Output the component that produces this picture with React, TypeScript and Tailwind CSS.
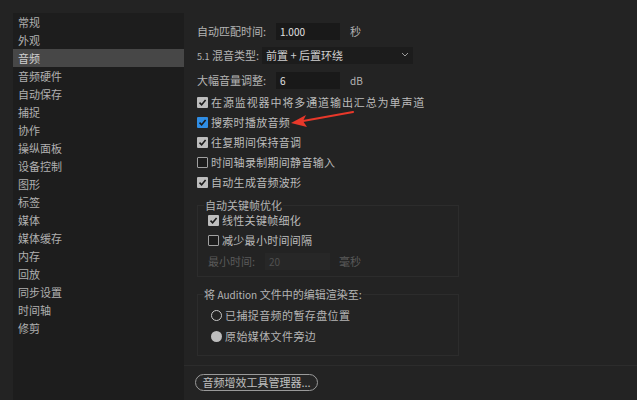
import React from 'react';

const font = { fontFamily: '"Noto Sans CJK SC", "Noto Sans", sans-serif' };

const sideItems = [
  '常规', '外观', '音频', '音频硬件', '自动保存', '捕捉', '协作', '操纵面板', '设备控制',
  '图形', '标签', '媒体', '媒体缓存', '内存', '回放', '同步设置', '时间轴', '修剪',
];

const Check: React.FC<{ checked?: boolean; blue?: boolean }> = ({ checked, blue }) => (
  <span
    className={`w-[11px] h-[11px] flex items-center justify-center shrink-0 rounded-[1px] ${
      checked ? (blue ? 'bg-[#2f8de4]' : 'bg-[#bdbdbd]') : 'border border-[#a0a0a0] bg-[#1c1c1c]'
    }`}
  >
    {checked && (
      <svg width="9" height="9" viewBox="0 0 9 9">
        <path d="M1.5 4.6 L3.6 6.8 L7.6 2" fill="none" stroke="#1a1a1a" strokeWidth="1.6" />
      </svg>
    )}
  </span>
);

const CheckRow: React.FC<{ label: string; checked?: boolean; blue?: boolean; wide?: boolean }> = ({
  label,
  checked,
  blue,
  wide,
}) => (
  <div className="h-[20px] flex items-center gap-[3px]">
    <Check checked={checked} blue={blue} />
    <span className={`text-[11px] text-[#bcbcbc] ${wide ? 'tracking-[0.9px]' : 'tracking-[0.3px]'}`}>{label}</span>
  </div>
);

export default function App() {
  return (
    <div className="w-[637px] h-[400px] bg-[#232323] flex relative overflow-hidden" style={font}>
      <aside className="ml-[13px] mt-[13px] w-[171px] bg-[#1d1d1d] flex flex-col">
        {sideItems.map((it) => (
          <div
            key={it}
            className={`h-[18px] flex items-center pl-[5px] text-[11px] ${
              it === '音频' ? 'bg-[#474747] text-[#d0d0d0]' : 'text-[#b0b0b0]'
            }`}
          >
            {it}
          </div>
        ))}
      </aside>

      <main className="pl-[13px] pt-[22px] flex flex-col text-[#b4b4b4] text-[11px]">
        <div className="h-[18px] flex items-center">
          <span className="w-[79px]">自动匹配时间:</span>
          <div className="w-[64px] h-[17px] bg-[#191919] flex items-center pl-[4px] text-[10px] text-[#e0e0e0]">1.000</div>
          <span className="ml-[10px]">秒</span>
        </div>
        <div className="h-[18px] mt-[6px] flex items-center">
          <span className="w-[65px]"><span className="text-[9px]">5.1</span> 混音类型:</span>
          <div className="w-[151px] h-[17px] bg-[#1c1c1c] flex items-center justify-between pl-[4px] pr-[4px] text-[#d0d0d0]">
            <span>前置 + 后置环绕</span>
            <svg width="8" height="6" viewBox="0 0 8 6">
              <path d="M1 1 L4 4 L7 1" fill="none" stroke="#9a9a9a" strokeWidth="1" />
            </svg>
          </div>
        </div>
        <div className="h-[18px] mt-[7px] flex items-center">
          <span className="w-[79px]">大幅音量调整:</span>
          <div className="w-[64px] h-[17px] bg-[#191919] flex items-center pl-[4px] text-[10px] text-[#e0e0e0]">6</div>
          <span className="ml-[10px] text-[10px]">dB</span>
        </div>

        <div className="mt-[3px] flex flex-col">
          <CheckRow label="在源监视器中将多通道输出汇总为单声道" checked wide />
          <CheckRow label="搜索时播放音频" checked blue />
          <CheckRow label="往复期间保持音调" checked />
          <CheckRow label="时间轴录制期间静音输入" />
          <CheckRow label="自动生成音频波形" checked />
        </div>

        <div className="relative mt-[13px] w-[262px] h-[72px] border border-[#2c2c2c] pl-[10px] pt-[4px]">
          <span className="absolute -top-[9px] left-[6px] px-[1px] bg-[#232323] text-[11px]">自动关键帧优化</span>
          <CheckRow label="线性关键帧细化" checked />
          <CheckRow label="减少最小时间间隔" />
          <div className="h-[18px] mt-[2px] flex items-center text-[#5a5a5a]">
            <span className="w-[57px]">最小时间:</span>
            <div className="w-[65px] h-[17px] bg-[#272727] flex items-center pl-[4px] text-[10px] text-[#505050]">20</div>
            <span className="ml-[9px]">毫秒</span>
          </div>
        </div>

        <div className="relative mt-[17px] w-[262px] h-[62px] border border-[#2c2c2c] pl-[13px] pt-[10px] flex flex-col">
          <span className="absolute -top-[9px] left-[5px] px-[1px] bg-[#232323] text-[11px]">
            将 <span className="text-[10px]">Audition</span> 文件中的编辑渲染至:
          </span>
          <div className="h-[21px] flex items-center gap-[3px]">
            <span className="w-[11px] h-[11px] rounded-full border-[1.5px] border-[#c8c8c8]" />
            <span className="tracking-[0.4px]">已捕捉音频的暂存盘位置</span>
          </div>
          <div className="h-[21px] flex items-center gap-[3px]">
            <span className="w-[11px] h-[11px] rounded-full bg-[#bdbdbd]" />
            <span className="tracking-[0.4px]">原始媒体文件旁边</span>
          </div>
        </div>

        <div className="mt-[9px] -ml-[13px] w-[453px] h-px bg-[#2c2c2c]" />

        <button className="mt-[8px] -ml-[2px] w-[123px] h-[17px] rounded-full border border-[#9a9a9a] bg-[#262626] text-[11px] text-[#c0c0c0] flex items-center justify-center">
          音频增效工具管理器...
        </button>
      </main>

      <svg className="absolute left-0 top-0 pointer-events-none" width="637" height="400">
        <path d="M353 112 L303 121" stroke="#e8382a" strokeWidth="2.2" strokeLinecap="round" />
        <path d="M291 123 L306 115 L303 121 L307 127 Z" fill="#e8382a" />
      </svg>
    </div>
  );
}
